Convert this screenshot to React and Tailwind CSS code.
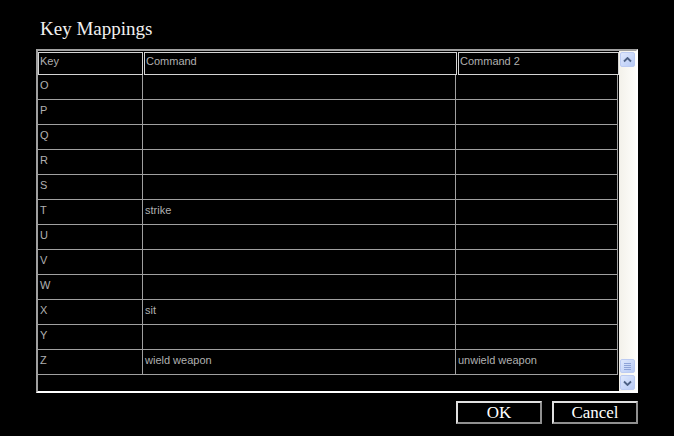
import React from 'react';

const rows = [
  { key: 'O', cmd: '', cmd2: '' },
  { key: 'P', cmd: '', cmd2: '' },
  { key: 'Q', cmd: '', cmd2: '' },
  { key: 'R', cmd: '', cmd2: '' },
  { key: 'S', cmd: '', cmd2: '' },
  { key: 'T', cmd: 'strike', cmd2: '' },
  { key: 'U', cmd: '', cmd2: '' },
  { key: 'V', cmd: '', cmd2: '' },
  { key: 'W', cmd: '', cmd2: '' },
  { key: 'X', cmd: 'sit', cmd2: '' },
  { key: 'Y', cmd: '', cmd2: '' },
  { key: 'Z', cmd: 'wield weapon', cmd2: 'unwield weapon' },
];

function ScrollButton({ down }) {
  return (
    <div className="w-[17px] h-[17px] p-[1px]">
      <div className="w-full h-full rounded-[2px] border border-[#bccbf2] bg-gradient-to-br from-[#dfe8fd] to-[#b7caf5] flex items-center justify-center">
        <svg width="9" height="6" viewBox="0 0 9 6">
          <path
            d={down ? 'M1 1.5 L4.5 5 L8 1.5' : 'M1 4.5 L4.5 1 L8 4.5'}
            fill="none"
            stroke="#4d6185"
            strokeWidth="1.8"
          />
        </svg>
      </div>
    </div>
  );
}

export default function App() {
  return (
    <div className="w-[674px] h-[436px] bg-black overflow-hidden">
      {/* Title */}
      <div className="h-[49px] pl-[40px] pt-[18px] text-[19px] leading-[22px] text-[#f0f0f0] font-['Liberation_Serif',serif]">
        Key Mappings
      </div>

      {/* Sunken frame */}
      <div className="ml-[36px] w-[602px] h-[344px] border-2 border-t-[#a0a0a0] border-l-[#a0a0a0] border-r-white border-b-white flex font-['Liberation_Sans',sans-serif] text-[11px] text-[#b0b0b0]">
        <div className="w-[581px] flex flex-col">
          <div className="flex h-[24px] pt-[1px]">
            <div className="w-[105px] border border-[#d4d4d4] pl-[1px] leading-[16px]">Key</div>
            <div className="w-[313px] ml-[1px] border border-[#d4d4d4] pl-[1px] leading-[16px]">Command</div>
            <div className="w-[161px] ml-[1px] border border-[#d4d4d4] pl-[1px] leading-[16px]">Command 2</div>
          </div>
          {rows.map((r) => (
            <div key={r.key} className="flex h-[25px] border-b border-[#a0a0a0] w-[580px]">
              <div className="w-[105px] border-r border-[#a0a0a0] pl-[2px] leading-[20px]">{r.key}</div>
              <div className="w-[313px] border-r border-[#a0a0a0] pl-[2px] leading-[20px]">{r.cmd}</div>
              <div className="w-[162px] border-r border-[#a0a0a0] pl-[2px] leading-[20px]">{r.cmd2}</div>
            </div>
          ))}
        </div>

        {/* Scrollbar */}
        <div className="w-[17px] ml-auto bg-gradient-to-r from-[#f3f1ea] to-[#fefefb] flex flex-col">
          <ScrollButton />
          <div className="flex-1 flex flex-col justify-end">
            <div className="h-[16px] p-[1px]">
              <div className="w-full h-full rounded-[2px] border border-[#bccbf2] bg-gradient-to-br from-[#dfe8fd] to-[#b7caf5] flex flex-col items-center justify-center gap-[1px]">
                <div className="w-[7px] h-[1px] bg-[#8ea3d8]" />
                <div className="w-[7px] h-[1px] bg-[#8ea3d8]" />
                <div className="w-[7px] h-[1px] bg-[#8ea3d8]" />
                <div className="w-[7px] h-[1px] bg-[#8ea3d8]" />
              </div>
            </div>
          </div>
          <ScrollButton down />
        </div>
      </div>

      {/* Buttons */}
      <div className="flex justify-end gap-[10px] pr-[36px] mt-[8px] font-['Liberation_Serif',serif] text-[17px] text-white">
        <button className="w-[86px] h-[23px] border-2 border-t-[#e0e0e0] border-l-[#e0e0e0] border-r-[#909090] border-b-[#909090] bg-black leading-[19px]">
          OK
        </button>
        <button className="w-[86px] h-[23px] border-2 border-t-[#e0e0e0] border-l-[#e0e0e0] border-r-[#909090] border-b-[#909090] bg-black leading-[19px]">
          Cancel
        </button>
      </div>
    </div>
  );
}
